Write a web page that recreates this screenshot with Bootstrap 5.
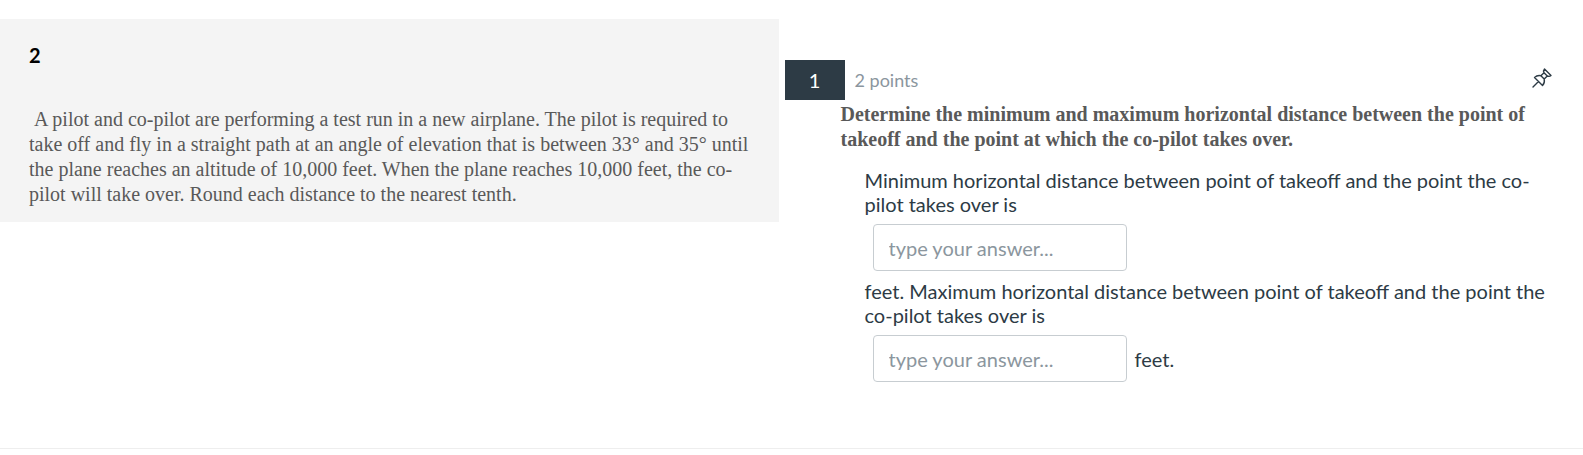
<!DOCTYPE html>
<html lang="en">
<head>
<meta charset="utf-8">
<meta name="viewport" content="width=device-width, initial-scale=1">
<title>Question 1</title>
<link href="https://cdn.jsdelivr.net/npm/bootstrap@5.3.0/dist/css/bootstrap.min.css" rel="stylesheet">
<style>
  body { font-family: Lato, "Liberation Sans", sans-serif; color: #2d3b45; font-size: 20px; line-height: 24px; }
  .quiz { padding-top: 19px; gap: 6px; border-bottom: 1px solid #eee; }
  .stimulus { background: #f4f4f4; padding: 24px 28px 15px 29px; }
  .stimulus-title { font-size: 20px; font-weight: 700; line-height: 24px; color: #000; margin-bottom: 40px; }
  .passage { font-family: "Liberation Serif", serif; font-size: 20px; line-height: 25px; color: #595959; }
  .question { padding-top: 41px; padding-bottom: 66px; }
  .number { width: 60px; height: 40px; background: #2d3b45; color: #fff; }
  .points { font-size: 18px; color: #8b969e; margin-left: 10px; }
  .pin { color: #2d3b45; margin-right: 30px; padding-bottom: 4px; }
  .prompt { padding: 2px 40px 0 56px; }
  .blanks { padding: 16px 32px 0 80px; }
  .blanks label { display: block; }
  .answer { width: 254px; height: 47px; font-size: 20px; line-height: 24px; padding: 0 15px; border-color: #c7cdd1; border-radius: 4px; color: #2d3b45; }
  .answer::placeholder { color: #8b969e; }
  @media (min-width: 992px) {
    .stimulus-col { flex: 0 0 calc(50% - 13px); }
  }
</style>
</head>
<body>
<main class="quiz d-lg-flex align-items-start">
  <section class="stimulus-col stimulus">
    <h1 class="stimulus-title">2</h1>
    <p class="passage mb-0">&nbsp;A pilot and co-pilot are performing a test run in a new airplane. The pilot is required to take off and fly in a straight path at an angle of elevation that is between 33° and 35° until the plane reaches an altitude of 10,000 feet. When the plane reaches 10,000 feet, the co-pilot will take over. Round each distance to the nearest tenth.</p>
  </section>
  <section class="question flex-fill">
    <header class="d-flex align-items-center">
      <div class="number d-flex align-items-center justify-content-center">1</div>
      <div class="points">2 points</div>
      <button type="button" class="pin btn px-0 pt-0 border-0 ms-auto d-flex" aria-label="Pin question">
        <svg width="22" height="22" viewBox="0 0 22 22" fill="none" stroke="currentColor" stroke-width="1.400" stroke-linejoin="round" stroke-linecap="round" aria-hidden="true">
          <path d="M2 20 7.500 14.500M13.500 2 20 8.500C18.800 9.600 17.500 9.600 16.300 9L13.200 12.100C13.800 14.500 13.300 16.500 11.500 18.500L3.500 10.500C5.500 8.700 7.500 8.200 9.900 8.800L13 5.700C12.400 4.500 12.400 3.200 13.500 2ZM9.900 8.800 13.200 12.100M13 5.700 16.300 9"/>
        </svg>
      </button>
    </header>
    <p class="prompt passage fw-bold mb-0">Determine the minimum and maximum horizontal distance between the point of takeoff and the point at which the co-pilot takes over.</p>
    <form class="blanks">
      <label for="minimum">Minimum horizontal distance between point of takeoff and the point the co-pilot takes over is</label>
      <div class="ms-2 my-2"><input id="minimum" type="text" class="answer form-control" placeholder="type your answer..."></div>
      <label for="maximum">feet. Maximum horizontal distance between point of takeoff and the point the co-pilot takes over is</label>
      <div class="d-flex align-items-center ms-2 mt-2 gap-2"><input id="maximum" type="text" class="answer form-control" placeholder="type your answer..."><span>feet.</span></div>
    </form>
  </section>
</main>
<script src="https://cdn.jsdelivr.net/npm/bootstrap@5.3.0/dist/js/bootstrap.bundle.min.js"></script>
</body>
</html>
